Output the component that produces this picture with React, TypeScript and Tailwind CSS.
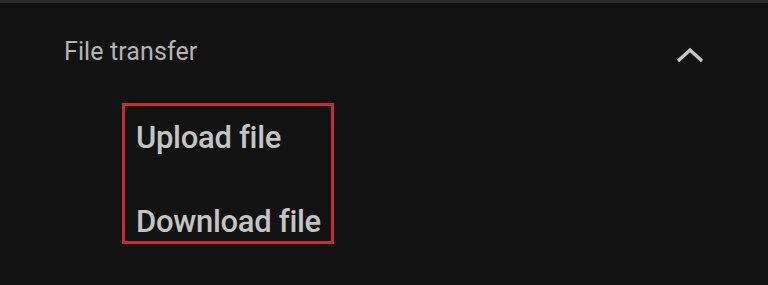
import React from "react";

export default function App() {
  return (
    <div className="w-[768px] h-[285px] bg-[#121212] overflow-hidden" style={{ fontFamily: "Roboto, 'Liberation Sans', sans-serif" }}>
      <div className="h-[3px] bg-[#2a2a2a]" />
      <div className="flex items-center justify-between pl-[64px] pr-[63px] pt-[34px]">
        <span className="text-[25px] leading-[30px] text-[#b4b4b4] tracking-[0.1px]">File transfer</span>
        <svg width="30" height="18" viewBox="0 0 30 18" className="mt-[6px]">
          <path d="M3 15 L15 4 L27 15" fill="none" stroke="#c8c8c8" strokeWidth="3.4" />
        </svg>
      </div>
      <div className="ml-[122px] mt-[36px] w-[212px] h-[141px] border-[3px] border-[#c62a38] pl-[11px] pt-[14px] flex flex-col">
        <span className="text-[31px] leading-[36px] font-medium text-[#c4c4c4] tracking-[-0.3px]">Upload file</span>
        <span className="mt-[48px] text-[31px] leading-[36px] font-medium text-[#c4c4c4] tracking-[-0.3px]">Download file</span>
      </div>
    </div>
  );
}
